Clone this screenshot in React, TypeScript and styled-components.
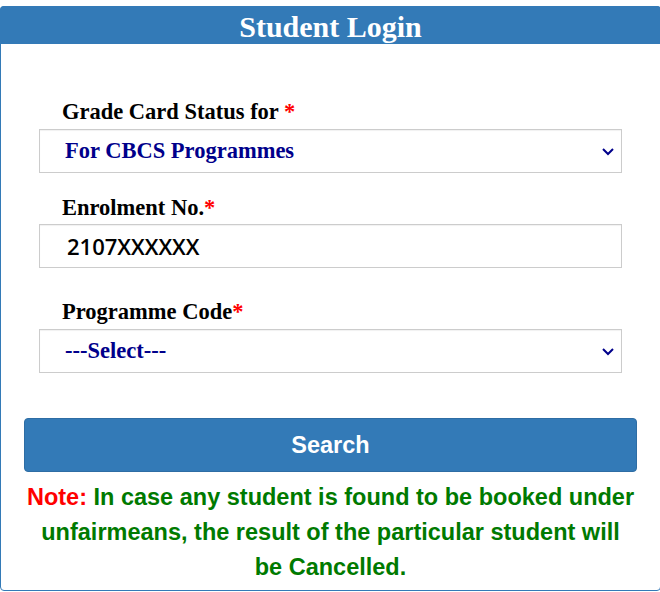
import React from 'react';
import styled, { createGlobalStyle } from 'styled-components';

const GlobalStyle = createGlobalStyle`
    html, body {
        margin: 0;
        padding: 0;
        background: #ffffff;
        overflow: hidden;
    }
`;

const Panel = styled.div`
    width: 661px;
    margin-top: 6px;
    height: 585px;
    box-sizing: border-box;
    border: 1px solid #337ab7;
    border-radius: 4px;
    background: #ffffff;
    display: flex;
    flex-direction: column;
`;

const Header = styled.div`
    height: 38px;
    margin: -1px -1px 0 -1px;
    background-color: #337ab7;
    border-radius: 4px 4px 0 0;
    display: flex;
    align-items: flex-start;
    justify-content: center;
`;

const Title = styled.h3`
    margin: 0;
    padding-top: 4px;
    color: #ffffff;
    font-family: 'Liberation Serif', 'Times New Roman', serif;
    font-weight: 700;
    font-size: 30px;
    line-height: 34px;
`;

const Body = styled.div`
    padding: 55px 0 0 0;
    display: flex;
    flex-direction: column;
`;

const Fields = styled.div`
    padding: 0 38px 0 38px;
    display: flex;
    flex-direction: column;
`;

const Label = styled.label<{ $top: number; $bottom: number }>`
    display: block;
    margin: ${({ $top }) => $top}px 0 ${({ $bottom }) => $bottom}px 0;
    padding-left: 23px;
    font-family: 'Liberation Serif', 'Times New Roman', serif;
    font-weight: 700;
    font-size: 22.5px;
    line-height: 25px;
    color: #000000;
`;

const Required = styled.span`
    color: #ff0000;
`;

const Box = styled.div`
    height: 44px;
    box-sizing: border-box;
    border: 1px solid #cccccc;
    box-shadow: inset 0 1px 1px rgba(0, 0, 0, 0.06);
    background: #ffffff;
    display: flex;
    align-items: center;
    justify-content: space-between;
    padding: 0 8px 0 25px;
`;

const SelectText = styled.span`
    font-family: 'Liberation Serif', 'Times New Roman', serif;
    font-weight: 700;
    font-size: 22.5px;
    color: #00008b;
`;

const InputText = styled.span`
    padding-left: 2px;
    font-family: 'Open Sans', sans-serif;
    font-weight: 600;
    font-size: 22px;
    color: #000000;
`;

const Chevron = styled.svg`
    width: 14px;
    height: 10px;
    margin-right: -2px;
`;

const Actions = styled.div`
    padding: 45px 23px 0 23px;
    display: flex;
    flex-direction: column;
`;

const SearchButton = styled.button`
    height: 54px;
    border: 1px solid #2e6da4;
    border-radius: 4px;
    background-color: #337ab7;
    color: #ffffff;
    font-family: 'Liberation Sans', Arial, sans-serif;
    font-weight: 700;
    font-size: 23.5px;
    cursor: pointer;
`;

const Note = styled.p`
    margin: 8px 0 0 0;
    text-align: center;
    font-family: 'Liberation Sans', Arial, sans-serif;
    font-weight: 700;
    font-size: 23.5px;
    line-height: 35px;
    color: #007a00;
`;

const NoteLabel = styled.span`
    color: #ff0000;
`;

const ChevronIcon = () => (
    <Chevron viewBox="0 0 14 10">
        <path d="M2 3 L7 8 L12 3" fill="none" stroke="#00008b" strokeWidth="2" />
    </Chevron>
);

const App: React.FC = () => {
    return (
        <>
            <GlobalStyle />
            <Panel>
                <Header>
                    <Title>Student Login</Title>
                </Header>
                <Body>
                    <Fields>
                        <Label $top={0} $bottom={5}>
                            Grade Card Status for <Required>*</Required>
                        </Label>
                        <Box>
                            <SelectText>For CBCS Programmes</SelectText>
                            <ChevronIcon />
                        </Box>
                        <Label $top={22} $bottom={4}>
                            Enrolment No.<Required>*</Required>
                        </Label>
                        <Box>
                            <InputText>2107XXXXXX</InputText>
                        </Box>
                        <Label $top={31} $bottom={5}>
                            Programme Code<Required>*</Required>
                        </Label>
                        <Box>
                            <SelectText>---Select---</SelectText>
                            <ChevronIcon />
                        </Box>
                    </Fields>
                    <Actions>
                        <SearchButton>Search</SearchButton>
                        <Note>
                            <NoteLabel>Note:</NoteLabel> In case any student is found to be booked
                            under unfairmeans, the result of the particular student will
                            {' be\u00a0Cancelled.'}
                        </Note>
                    </Actions>
                </Body>
            </Panel>
        </>
    );
};

export default App;
